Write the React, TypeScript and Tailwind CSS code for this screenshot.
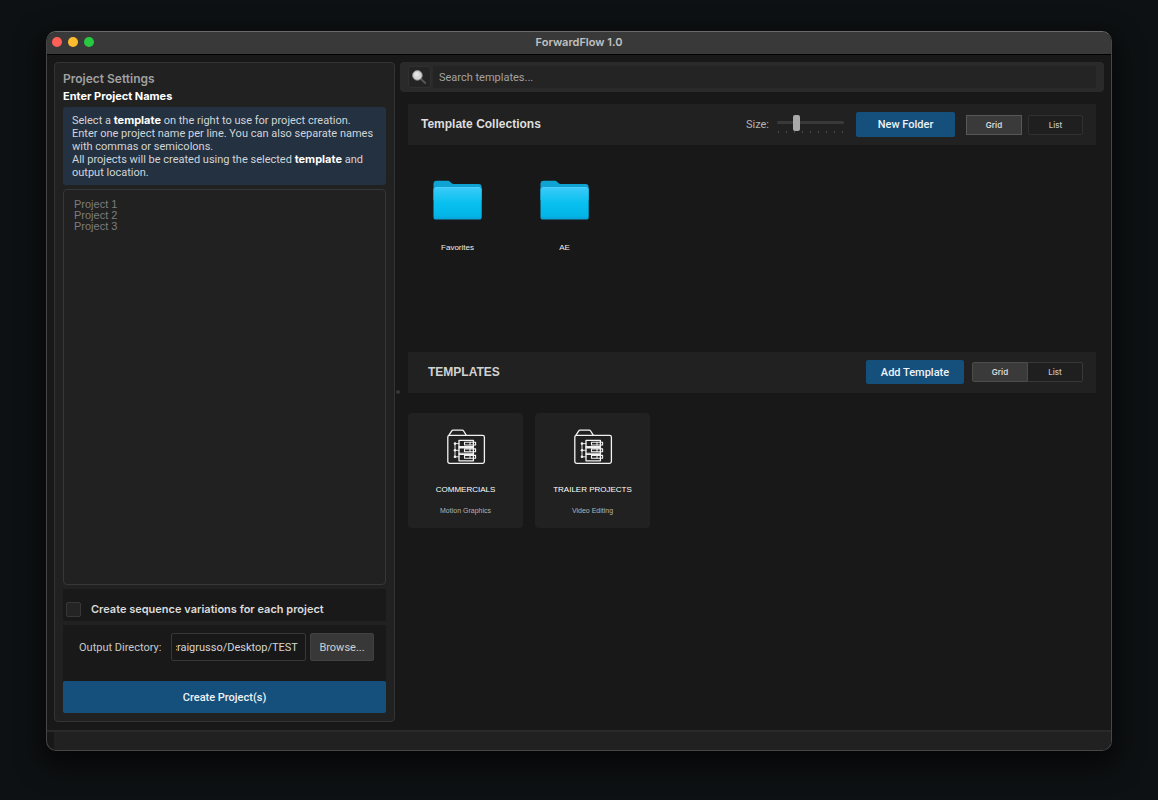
import { useEffect, useRef, useState } from "react";

function FolderIcon({ id }: { id: string }) {
  return (
    <svg className="h-10 w-[49px]" viewBox="0 0 49 40" aria-hidden="true">
      <defs>
        <linearGradient id={id} x1="0" y1="0" x2="0" y2="1">
          <stop offset="0" stopColor="#3bcbf8" />
          <stop offset="0.5" stopColor="#08c0ef" />
          <stop offset="0.88" stopColor="#02b6e8" />
          <stop offset="1" stopColor="#0a9fd6" />
        </linearGradient>
      </defs>
      <path
        d="M0.5 4C0.5 2 1.7 0.8 3.6 0.8H14.5C15.8 0.8 16.5 1.2 17.3 2L18.4 3.1C19.1 3.7 19.8 4 20.9 4H45.6C47.5 4 48.6 5.1 48.6 7V20H0.5Z"
        fill="#0fa3d3"
      />
      <rect x="0.5" y="7.2" width="48.2" height="32.3" rx="2.6" fill={`url(#${id})`} />
      <path d="M2.5 7.7H46.7" stroke="#66d9ff" strokeWidth="0.7" />
    </svg>
  );
}

function ProjectTreeIcon() {
  return (
    <svg
      className="h-[36px] w-[40px]"
      viewBox="0 0 40 36"
      fill="none"
      stroke="#f2f2f2"
      strokeWidth="1.3"
      strokeLinejoin="round"
      strokeLinecap="round"
      aria-hidden="true"
    >
      <rect x="1.8" y="6.3" width="36.6" height="28" rx="1.8" />
      <path d="M3 6.2L5.6 2.2C5.9 1.6 6.4 1.2 7.2 1.2H16C16.8 1.2 17.4 1.5 17.8 2.2L20.2 6.2" />
      <path d="M13 11.3H27.4V31.8H13Z" />
      <path d="M13 17.6H27.4M13 18.9H27.4M13 24.2H27.4M13 25.5H27.4" strokeWidth="1.1" />
      <path d="M18.5 13.2H29.6V16H18.5ZM18.5 19.9H29.6V22.7H18.5ZM18.5 26.4H29.6V29.2H18.5Z" strokeWidth="1.1" />
      <path d="M24 13.2V16M24 19.9V22.7M24 26.4V29.2" strokeWidth="1" />
      <path d="M9 14.6V27.8M9 14.6H13M9 21.3H13M9 27.8H13" strokeWidth="0.9" />
      <g fill="#f2f2f2" stroke="none">
        <circle cx="9" cy="14.6" r="1.3" />
        <circle cx="9" cy="21.3" r="1.3" />
        <circle cx="9" cy="27.8" r="1.3" />
      </g>
    </svg>
  );
}

function MagnifierIcon() {
  return (
    <svg className="mr-0.5 h-4 w-4" viewBox="0 0 16 16" aria-hidden="true">
      <path d="M9.8 9.8L14.2 14" stroke="#555" strokeWidth="2" strokeLinecap="round" />
      <circle cx="6.4" cy="6.4" r="4.8" fill="#d4d4d4" stroke="#8d8d8d" strokeWidth="0.9" />
      <circle cx="5.6" cy="5.4" r="2.2" fill="#e4e4e4" />
    </svg>
  );
}

function ProjectSettings() {
  const [names, setNames] = useState("");
  const [directory, setDirectory] = useState("/Users/craigrusso/Desktop/TEST");
  const directoryRef = useRef<HTMLInputElement>(null);

  // Keep the end of a long path in view.
  useEffect(() => {
    const field = directoryRef.current;
    if (field) field.scrollLeft = field.scrollWidth;
  }, []);

  return (
    <section className="flex w-[341px] shrink-0 flex-col rounded border border-[#343434] bg-[#212121] p-2">
      <h2 className="font-['Inter',sans-serif] text-[12px] leading-4 font-semibold text-[#a0a0a0]">Project Settings</h2>
      <label htmlFor="names" className="pt-px font-['Inter',sans-serif] text-[11px] leading-4 font-bold text-white">
        Enter Project Names
      </label>
      <div className="mt-[3px] rounded-[3px] bg-[#243140] px-[9px] pt-[7px] pb-1.5 text-[11px] leading-[13px] whitespace-nowrap text-[#d2d5d8]">
        <p>
          Select a <strong className="font-['Inter',sans-serif] font-bold text-white">template</strong> on the right to
          use for project creation.
        </p>
        <p>
          Enter one project name per line. You can also separate names
          <br />
          with commas or semicolons.
        </p>
        <p>
          All projects will be created using the selected{" "}
          <strong className="font-['Inter',sans-serif] font-bold text-white">template</strong> and
          <br />
          output location.
        </p>
      </div>
      <textarea
        id="names"
        value={names}
        onChange={(e) => setNames(e.target.value)}
        placeholder={"Project 1\nProject 2\nProject 3"}
        className="mt-1 w-full flex-1 resize-none rounded border border-[#373737] bg-[#212121] px-2.5 py-[9px] font-['Liberation_Sans',sans-serif] text-[11px] leading-[11px] text-[#ddd] outline-none placeholder:text-[#7d7d7d]"
      />
      <div className="mt-1 flex h-8 items-center bg-[#191919] pt-2 pl-[3px]">
        <label className="flex items-center gap-2.5 font-['Inter',sans-serif] text-[11px] font-semibold text-[#dcdcdc]">
          <input
            type="checkbox"
            className="h-[15px] w-[15px] appearance-none rounded-[2px] border border-[#383838] bg-[#242424] checked:bg-[#134f7c]"
          />
          Create sequence variations for each project
        </label>
      </div>
      <div className="mt-1 flex h-14 items-start gap-1 bg-[#191919] pt-2 pr-3 pl-4">
        <label htmlFor="directory" className="w-[88px] pt-px text-[11px] leading-7 whitespace-nowrap text-[#c9c9c9]">
          Output Directory:
        </label>
        <input
          id="directory"
          ref={directoryRef}
          value={directory}
          onChange={(e) => setDirectory(e.target.value)}
          className="h-7 w-0 flex-1 rounded-[2px] border border-[#373737] bg-[#181818] pr-[7px] pl-1 text-[11px] text-[#d6d6d6] outline-none"
        />
        <button className="h-7 w-16 rounded-[2px] border border-[#414141] bg-[#383838] pt-0.5 text-[11px] text-[#cfcfcf]">
          Browse...
        </button>
      </div>
      <button className="h-8 rounded-[2px] bg-[#154f7c] pt-0.5 text-[11px] font-medium text-[#eef3f7]">
        Create Project(s)
      </button>
    </section>
  );
}

function CollectionsHeader() {
  const [size, setSize] = useState(26);
  return (
    <header className="mx-2 mt-3 flex h-[41px] items-center bg-[#212121] px-[13px]">
      <h2 className="flex-1 pb-px font-['Liberation_Sans',sans-serif] text-[12px] font-bold text-[#dedede]">
        Template Collections
      </h2>
      <label htmlFor="size" className="mr-2 pt-0.5 text-[11px] text-[#b4b4b4]">
        Size:
      </label>
      <div className="mr-3 flex w-[67px] flex-col pb-0.5">
        <input
          id="size"
          type="range"
          min={0}
          max={100}
          value={size}
          onChange={(e) => setSize(Number(e.target.value))}
          className="h-4 w-full appearance-none bg-transparent [&::-webkit-slider-runnable-track]:h-[3px] [&::-webkit-slider-runnable-track]:rounded-sm [&::-webkit-slider-runnable-track]:bg-[#393939] [&::-webkit-slider-thumb]:-mt-[6px] [&::-webkit-slider-thumb]:h-4 [&::-webkit-slider-thumb]:w-[7px] [&::-webkit-slider-thumb]:appearance-none [&::-webkit-slider-thumb]:rounded-[2px] [&::-webkit-slider-thumb]:bg-[#a9a9a9]"
        />
        <div className="flex justify-between px-px">
          {Array.from({ length: 9 }, (_, i) => (
            <span key={i} className="h-0.5 w-px bg-[#4a4a4a]" />
          ))}
        </div>
      </div>
      <button className="h-[25px] w-[99px] rounded-[2px] bg-[#154f7c] pt-0.5 text-[11px] font-medium text-[#eef3f7]">
        New Folder
      </button>
      <button className="ml-[11px] h-5 w-14 border border-[#575757] bg-[#3a3a3a] font-['Inter',sans-serif] text-[8px] font-semibold text-[#d8d8d8]">
        Grid
      </button>
      <button className="ml-1.5 h-5 w-[55px] rounded-[2px] border border-[#303030] bg-[#1f1f1f] font-['Inter',sans-serif] text-[8px] font-medium text-[#c4c4c4]">
        List
      </button>
    </header>
  );
}

function TemplatesHeader() {
  return (
    <header className="mx-2 flex h-[41px] items-center bg-[#212121] pr-[13px] pb-px pl-5">
      <h2 className="flex-1 pb-px font-['Liberation_Sans',sans-serif] text-[12px] font-bold text-[#d2d2d2]">TEMPLATES</h2>
      <button className="h-6 w-[98px] rounded-[2px] bg-[#154f7c] pt-0.5 text-[11px] font-medium text-[#eef3f7]">
        Add Template
      </button>
      <div className="ml-2 flex">
        <button className="h-5 w-14 rounded-l-[2px] border border-[#4c4c4c] bg-[#3a3a3a] font-['Inter',sans-serif] text-[8px] font-semibold text-[#d8d8d8]">
          Grid
        </button>
        <button className="h-5 w-[55px] rounded-r-[2px] border border-l-0 border-[#383838] bg-[#1f1f1f] font-['Inter',sans-serif] text-[8px] font-medium text-[#c4c4c4]">
          List
        </button>
      </div>
    </header>
  );
}

const collections = ["Favorites", "AE"];

const templates = [
  { name: "COMMERCIALS", kind: "Motion Graphics" },
  { name: "TRAILER PROJECTS", kind: "Video Editing" },
];

export default function App() {
  return (
    <div className="flex min-h-screen bg-[#0e1113] px-[46px] pt-[31px] pb-[49px] font-['Roboto',sans-serif]">
      <div className="flex flex-1 flex-col overflow-hidden rounded-[10px] border border-[#464646] border-t-[#6a6a6a] bg-[#181818] shadow-[0_10px_24px_6px_rgba(0,0,0,0.6)]">
        <div className="grid h-[23px] grid-cols-[1fr_auto_1fr] items-center border-b border-black bg-[#393939] pb-0.5">
          <div className="flex gap-1.5 pl-[5px]">
            <button aria-label="Close" className="h-2.5 w-2.5 rounded-full bg-[#ff5f57]" />
            <button aria-label="Minimize" className="h-2.5 w-2.5 rounded-full bg-[#febc2e]" />
            <button aria-label="Zoom" className="h-2.5 w-2.5 rounded-full bg-[#28c840]" />
          </div>
          <h1 className="font-['Inter',sans-serif] text-[11px] leading-4 font-semibold text-[#c0c0c0]">
            ForwardFlow 1.0
          </h1>
        </div>

        <div className="flex flex-1 px-[7px] pt-[7px] pb-2">
          <ProjectSettings />
          <div className="flex w-[5px] items-center justify-center">
            <span className="h-1 w-1 rounded-full bg-[#373737]" />
          </div>

          <main className="flex min-w-0 flex-1 flex-col">
            <form className="flex h-[30px] items-center gap-0.5 rounded bg-[#2a2a2a] px-2" onSubmit={(e) => e.preventDefault()}>
              <button
                aria-label="Search"
                className="flex h-[22px] w-[23px] items-center justify-center rounded-[3px] border border-[#303030] bg-[#242424]"
              >
                <MagnifierIcon />
              </button>
              <input
                aria-label="Search templates"
                placeholder="Search templates..."
                className="h-[22px] min-w-0 flex-1 bg-[#242424] px-1.5 text-[11px] text-[#ddd] outline-none placeholder:text-[#a2a2a2]"
              />
            </form>

            <CollectionsHeader />
            <ul className="flex h-[207px] items-start px-1 pt-[35px]">
              {collections.map((name) => (
                <li key={name} className="w-[107px]">
                  <button className="flex w-full flex-col items-center gap-[22px]">
                    <FolderIcon id={`folder-${name}`} />
                    <span className="font-['Liberation_Sans',sans-serif] text-[8px] leading-3 text-[#ececec]">{name}</span>
                  </button>
                </li>
              ))}
            </ul>

            <TemplatesHeader />
            <ul className="flex gap-3 px-2 pt-5">
              {templates.map((t) => (
                <li key={t.name}>
                  <button className="flex h-[115px] w-[115px] flex-col items-center rounded bg-[#212121] pt-4 font-['Liberation_Sans',sans-serif] whitespace-nowrap">
                    <ProjectTreeIcon />
                    <span className="mt-[19px] text-[8px] leading-3 text-white">{t.name}</span>
                    <span className="mt-[10px] text-[7px] leading-[9px] text-[#b4b4b4]">{t.kind}</span>
                  </button>
                </li>
              ))}
            </ul>
          </main>
        </div>

        <footer className="h-5 border-t-2 border-[#2a2a2a] pl-[7px]">
          <div className="h-full bg-[#212121]" />
        </footer>
      </div>
    </div>
  );
}
